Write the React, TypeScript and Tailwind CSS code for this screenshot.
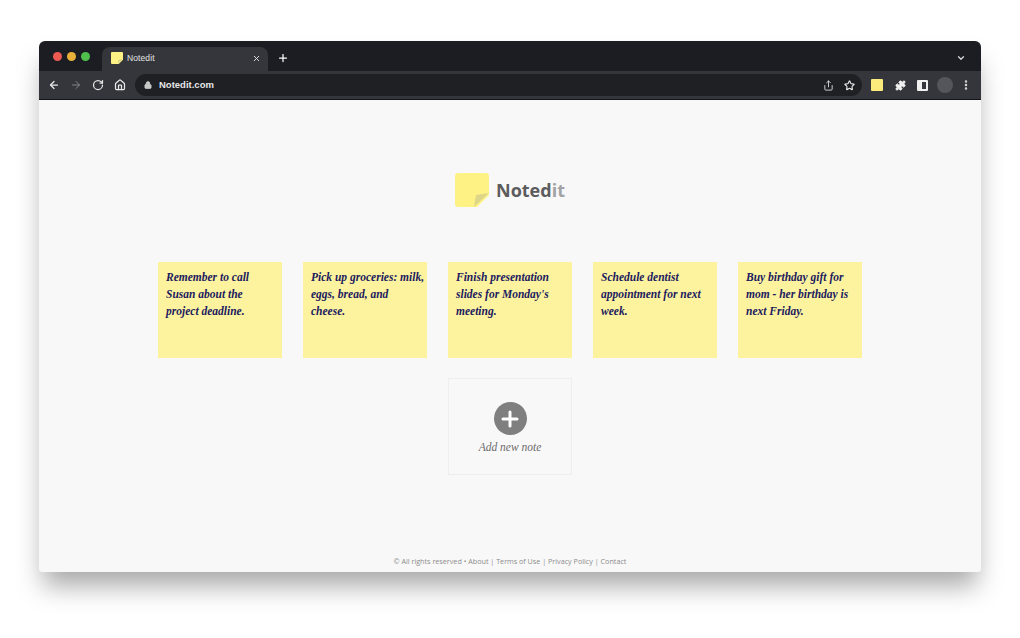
import { ArrowLeft, ArrowRight, ChevronDown, EllipsisVertical, Home, Lock, Plus, Puzzle, RotateCw, Share, Star, X } from "lucide-react";

const notes = [
  ["Remember to call", "Susan about the", "project deadline."],
  ["Pick up groceries: milk,", "eggs, bread, and", "cheese."],
  ["Finish presentation", "slides for Monday's", "meeting."],
  ["Schedule dentist", "appointment for next", "week."],
  ["Buy birthday gift for", "mom - her birthday is", "next Friday."],
];

function StickyIcon({ className }: { className: string }) {
  return (
    <svg viewBox="0 0 34 34" className={className}>
      <path d="M3 0h28a3 3 0 0 1 3 3v19L22 34H3a3 3 0 0 1-3-3V3a3 3 0 0 1 3-3z" fill="#fdf283" />
      <path d="M34 20 L21 22 L19 34 z" fill="#ddd588" />
    </svg>
  );
}

function Note({ lines }: { lines: string[] }) {
  return (
    <div className="w-[124px] h-[96px] bg-[#fdf39e] pt-[7px] pl-2 text-[#1b1a5e] text-[11.5px] leading-[17px] italic font-bold font-['Liberation_Serif',serif]">
      {lines.map((line) => (
        <div key={line} className="whitespace-nowrap">
          {line}
        </div>
      ))}
    </div>
  );
}

export default function App() {
  return (
    <div className="w-[1020px] h-[638px] bg-white overflow-hidden pt-[41px] pl-[39px] font-['Liberation_Sans',sans-serif]">
      <div className="w-[942px] h-[531px] rounded-t-[6px] rounded-b-[3px] overflow-hidden bg-[#f8f8f8] flex flex-col shadow-[0_18px_26px_-4px_rgba(0,0,0,0.34)]">
        {/* title bar */}
        <div className="h-[30px] bg-[#1c1d22] flex items-end shrink-0">
          <div className="flex items-center gap-[5px] pl-[14px] pb-[10px] w-[63px]">
            <span className="w-[9px] h-[9px] rounded-full bg-[#ec5a52] shrink-0" />
            <span className="w-[9px] h-[9px] rounded-full bg-[#e9b13a] shrink-0" />
            <span className="w-[9px] h-[9px] rounded-full bg-[#4fc04c] shrink-0" />
          </div>
          <div className="w-[166px] h-[24px] bg-[#35363b] rounded-t-[8px] flex items-center pl-[9px] pr-[7px] pb-[2px]">
            <StickyIcon className="w-3 h-3 shrink-0" />
            <span className="ml-[4px] text-[8.5px] tracking-[0.1px] text-[#e3e3e5] flex-1">Notedit</span>
            <X size={9} strokeWidth={2.5} className="text-[#e0e0e0]" />
          </div>
          <div className="pl-[9px] pb-[7px]">
            <Plus size={12} strokeWidth={2.5} className="text-white" />
          </div>
          <div className="ml-auto pr-[15px] pb-[8px]">
            <ChevronDown size={10} strokeWidth={3} className="text-[#d8d8d8]" />
          </div>
        </div>

        {/* toolbar */}
        <div className="h-[29px] bg-[#35363b] border-b border-[#141518] flex items-center shrink-0 pl-[9px]">
          <ArrowLeft size={12} strokeWidth={2.5} className="text-[#e8e8e8]" />
          <ArrowRight size={12} strokeWidth={2} className="text-[#84858a] ml-[10px]" />
          <RotateCw size={12} strokeWidth={2.5} className="text-[#e8e8e8] ml-[10px]" />
          <Home size={12} strokeWidth={2.5} className="text-[#e8e8e8] ml-[10px]" />
          <div className="ml-[9px] w-[727px] h-[22px] rounded-full bg-[#1f2024] flex items-center pl-[9px] pr-[7px]">
            <Lock size={8} strokeWidth={3} fill="#c8c8c8" className="text-[#c8c8c8]" />
            <span className="ml-[7px] text-[9.5px] font-bold text-[#e6e6e8] flex-1">Notedit.com</span>
            <Share size={11} strokeWidth={2} className="text-[#dadada]" />
            <Star size={11} strokeWidth={2.5} className="text-[#e8e8e8] ml-[10px]" />
          </div>
          <div className="w-3 h-3 bg-[#fbeb7c] rounded-[1px] ml-[9px] shrink-0" />
          <Puzzle size={11} strokeWidth={2} fill="#f0f0f0" className="text-[#f0f0f0] ml-[12px] shrink-0" />
          <div className="w-[11px] h-[11px] border-2 border-[#f0f0f0] border-l-[5px] rounded-[1px] ml-[11px] shrink-0" />
          <div className="w-4 h-4 rounded-full bg-[#55565b] ml-[9px] shrink-0" />
          <EllipsisVertical size={12} strokeWidth={3} className="text-[#dcdcdc] ml-[7px] shrink-0" />
        </div>

        {/* page */}
        <div className="flex-1 flex flex-col items-center pt-[73px]">
          <div className="flex items-center h-[34px]">
            <StickyIcon className="w-[34px] h-[34px]" />
            <span className="ml-[7px] text-[18px] font-bold font-['Open_Sans',sans-serif] text-[#5c5c5e]">
              Noted<span className="text-[#a3a3a5]">it</span>
            </span>
          </div>

          <div className="mt-[55px] flex gap-[21px]">
            {notes.map((lines) => (
              <Note key={lines[0]} lines={lines} />
            ))}
          </div>

          <div className="mt-5 w-[124px] h-[97px] border border-[#eeeeee] flex flex-col items-center pt-[23px]">
            <div className="w-[33px] h-[33px] rounded-full bg-[#7f7f7f] flex items-center justify-center">
              <Plus size={24} strokeWidth={3} className="text-white" />
            </div>
            <span className="mt-[4px] text-[11.5px] italic text-[#6c6c6c] font-['Liberation_Serif',serif]">Add new note</span>
          </div>

          <div className="mt-auto mb-[5px] text-[7.2px] text-[#8c8c8c] font-['Open_Sans',sans-serif]">
            © All rights reserved • About | Terms of Use | Privacy Policy | Contact
          </div>
        </div>
      </div>
    </div>
  );
}
